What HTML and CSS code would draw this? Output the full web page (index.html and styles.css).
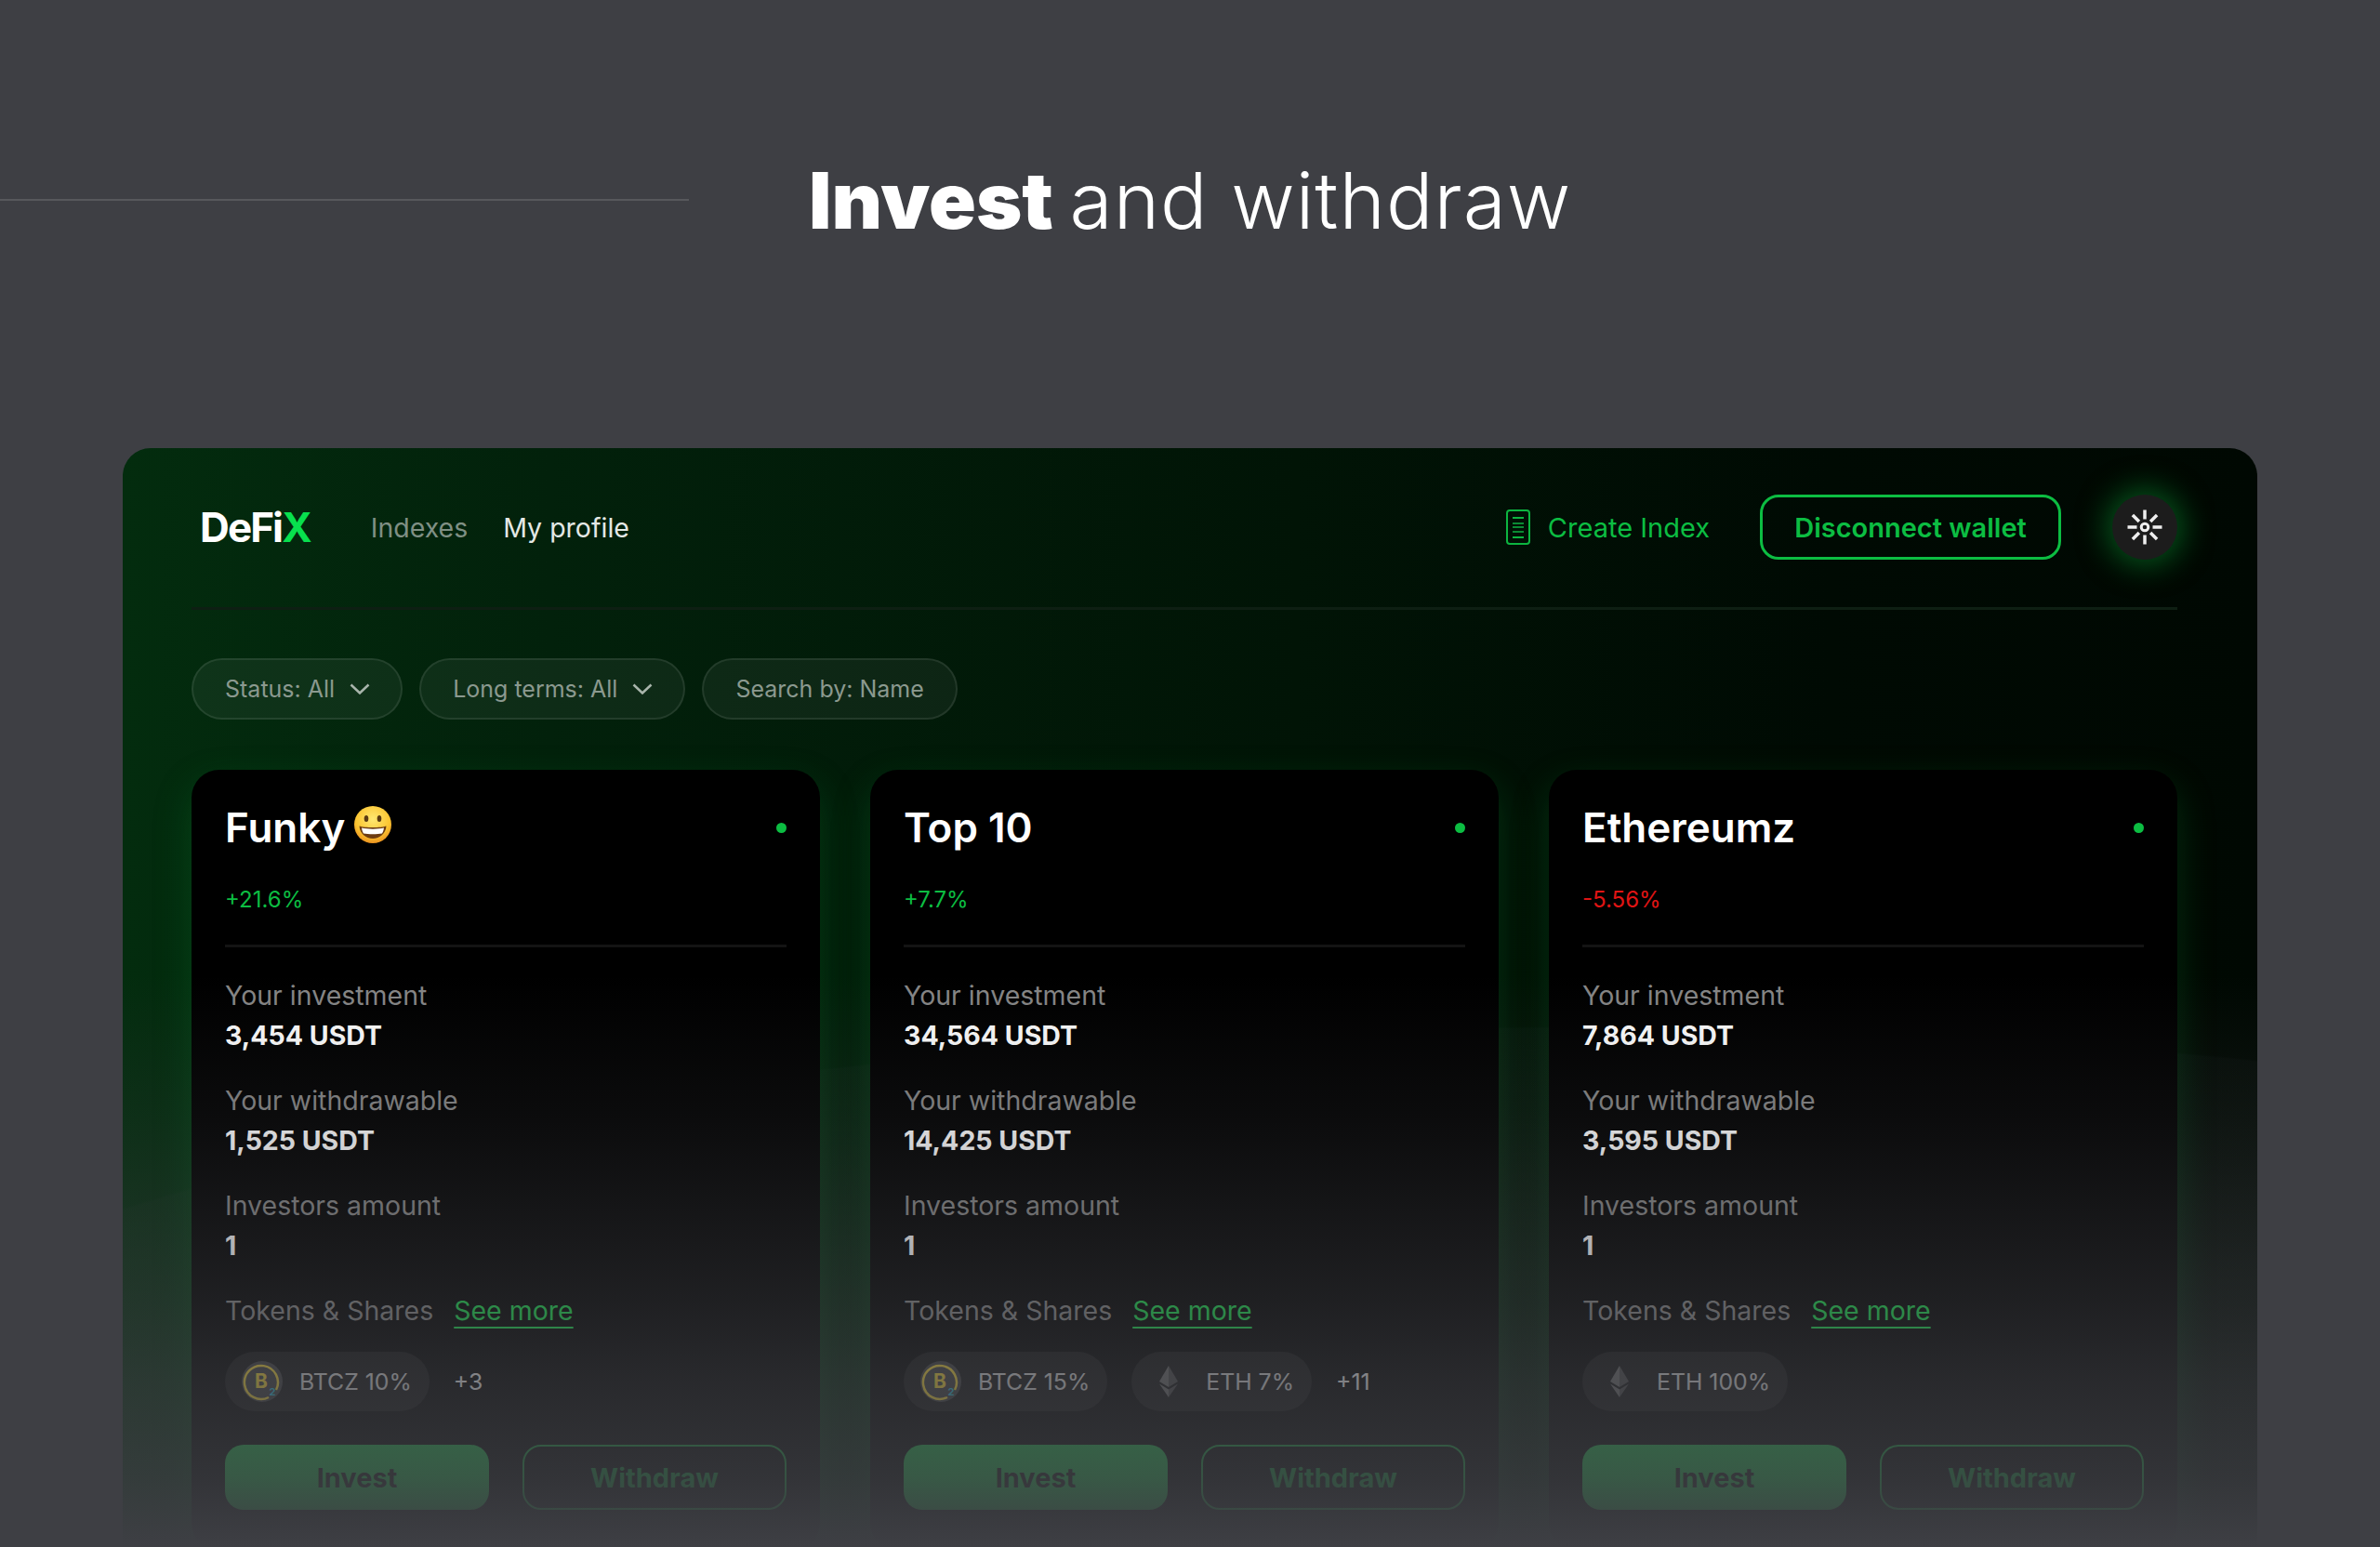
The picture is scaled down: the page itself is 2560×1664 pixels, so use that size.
FILE: index.html
```html
<!DOCTYPE html>
<html lang="en">
<head>
  <meta charset="UTF-8" />
  <title>DeFiX - Invest and withdraw</title>
  <link rel="stylesheet" href="styles.css">
</head>
<body>
  <section class="hero">
    <div class="hero-line"></div>
    <h1 class="hero-title"><b>Invest</b> <span>and withdraw</span></h1>
  </section>

  <main class="panel">
    <header class="topbar">
      <div class="logo">DeFi<span>X</span></div>
      <nav class="nav">
        <a class="nav-link">Indexes</a>
        <a class="nav-link active">My profile</a>
      </nav>
      <a class="create-link">
        <svg class="doc-icon" width="26" height="38" viewBox="0 0 26 38" fill="none">
          <rect x="1" y="1" width="24" height="36" rx="3" stroke="#0cb540" stroke-width="2"/>
          <path d="M7 9h12M7 30h12" stroke="#0cb540" stroke-width="2"/>
          <path d="M7 15h12M7 19h12M7 24h12" stroke="#0a8a33" stroke-width="2"/>
        </svg>
        Create Index
      </a>
      <button class="wallet-btn">Disconnect wallet</button>
      <button class="theme-btn">
        <svg width="40" height="40" viewBox="0 0 40 40" fill="none" stroke="#eee" stroke-width="3.500">
          <circle cx="20" cy="20" r="3.800" stroke-width="3"/>
          <path d="M20 1.500v10M20 28.500v10M1.500 20h10M28.500 20h10M6.900 6.900l7 7M26.100 26.100l7 7M33.100 6.900l-7 7M13.900 26.100l-7 7"/>
        </svg>
      </button>
    </header>

    <div class="filters">
      <div class="filter has-menu">Status: All
        <svg class="chevron" width="22" height="12" viewBox="0 0 22 12" fill="none"><path d="M1.500 1.500L11 10.500l9.500-9"/></svg>
      </div>
      <div class="filter has-menu">Long terms: All
        <svg class="chevron" width="22" height="12" viewBox="0 0 22 12" fill="none"><path d="M1.500 1.500L11 10.500l9.500-9"/></svg>
      </div>
      <div class="filter">Search by: Name</div>
    </div>

    <div class="cards">
      <article class="card">
        <div class="card-head">
          <h2 class="card-title">Funky</h2>
          <svg class="emoji" width="40" height="40" viewBox="0 0 40 40">
            <defs>
              <radialGradient id="face" cx="50%" cy="35%" r="70%">
                <stop offset="0%" stop-color="#ffe872"/>
                <stop offset="65%" stop-color="#fbc531"/>
                <stop offset="100%" stop-color="#e8861c"/>
              </radialGradient>
            </defs>
            <circle cx="20" cy="20" r="20" fill="url(#face)"/>
            <ellipse cx="13" cy="13.500" rx="2.300" ry="3.600" fill="#5a3a12"/>
            <ellipse cx="27" cy="13.500" rx="2.300" ry="3.600" fill="#5a3a12"/>
            <path d="M5.500 21.500c5 2 24 2 29 0-.5 8-7 13.500-14.500 13.500S6 29.500 5.500 21.500z" fill="#6d3c12"/>
            <path d="M8 23.500c6 1.500 18 1.500 24 0-.5 3-1 4.500-2 6-5 1-15 1-20 0-1-1.500-1.500-3-2-6z" fill="#fff"/>
          </svg>
          <span class="status-dot"></span>
        </div>
        <div class="change up">+21.6%</div>
        <hr class="card-rule">
        <div class="stat"><div class="stat-label">Your investment</div><div class="stat-value">3,454 USDT</div></div>
        <div class="stat"><div class="stat-label">Your withdrawable</div><div class="stat-value">1,525 USDT</div></div>
        <div class="stat"><div class="stat-label">Investors amount</div><div class="stat-value">1</div></div>
        <div class="tokens-head"><span class="stat-label">Tokens &amp; Shares</span><a class="see-more">See more</a></div>
        <div class="tokens">
          <div class="chip">
            <svg class="token-icon" width="44" height="44" viewBox="0 0 44 44">
              <circle cx="22" cy="22" r="22" fill="#434345"/>
              <path d="M37 31a18 18 0 1 0-8 8" fill="none" stroke="#ffdf3a" stroke-width="2.500"/>
              <text x="21" y="29" class="btc-b">B</text>
              <text x="33" y="37" class="btc-two">2</text>
            </svg>
            BTCZ 10%
          </div>
          <span class="more-count">+3</span>
        </div>
        <div class="card-actions"><button class="invest-btn">Invest</button><button class="withdraw-btn">Withdraw</button></div>
      </article>

      <article class="card">
        <div class="card-head">
          <h2 class="card-title">Top 10</h2>
          <span class="status-dot"></span>
        </div>
        <div class="change up">+7.7%</div>
        <hr class="card-rule">
        <div class="stat"><div class="stat-label">Your investment</div><div class="stat-value">34,564 USDT</div></div>
        <div class="stat"><div class="stat-label">Your withdrawable</div><div class="stat-value">14,425 USDT</div></div>
        <div class="stat"><div class="stat-label">Investors amount</div><div class="stat-value">1</div></div>
        <div class="tokens-head"><span class="stat-label">Tokens &amp; Shares</span><a class="see-more">See more</a></div>
        <div class="tokens">
          <div class="chip">
            <svg class="token-icon" width="44" height="44" viewBox="0 0 44 44">
              <circle cx="22" cy="22" r="22" fill="#434345"/>
              <path d="M37 31a18 18 0 1 0-8 8" fill="none" stroke="#ffdf3a" stroke-width="2.500"/>
              <text x="21" y="29" class="btc-b">B</text>
              <text x="33" y="37" class="btc-two">2</text>
            </svg>
            BTCZ 15%
          </div>
          <div class="chip">
            <svg class="token-icon" width="44" height="44" viewBox="0 0 44 44">
              <path d="M22 5L12 22l10 6z" fill="#707070"/>
              <path d="M22 5l10 17-10 6z" fill="#4c4c4c"/>
              <path d="M12 24.500L22 39V30.500z" fill="#707070"/>
              <path d="M32 24.500L22 39V30.500z" fill="#4c4c4c"/>
            </svg>
            ETH 7%
          </div>
          <span class="more-count">+11</span>
        </div>
        <div class="card-actions"><button class="invest-btn">Invest</button><button class="withdraw-btn">Withdraw</button></div>
      </article>

      <article class="card">
        <div class="card-head">
          <h2 class="card-title">Ethereumz</h2>
          <span class="status-dot"></span>
        </div>
        <div class="change down">-5.56%</div>
        <hr class="card-rule">
        <div class="stat"><div class="stat-label">Your investment</div><div class="stat-value">7,864 USDT</div></div>
        <div class="stat"><div class="stat-label">Your withdrawable</div><div class="stat-value">3,595 USDT</div></div>
        <div class="stat"><div class="stat-label">Investors amount</div><div class="stat-value">1</div></div>
        <div class="tokens-head"><span class="stat-label">Tokens &amp; Shares</span><a class="see-more">See more</a></div>
        <div class="tokens">
          <div class="chip">
            <svg class="token-icon" width="44" height="44" viewBox="0 0 44 44">
              <path d="M22 5L12 22l10 6z" fill="#707070"/>
              <path d="M22 5l10 17-10 6z" fill="#4c4c4c"/>
              <path d="M12 24.500L22 39V30.500z" fill="#707070"/>
              <path d="M32 24.500L22 39V30.500z" fill="#4c4c4c"/>
            </svg>
            ETH 100%
          </div>
        </div>
        <div class="card-actions"><button class="invest-btn">Invest</button><button class="withdraw-btn">Withdraw</button></div>
      </article>
    </div>
  </main>
</body>
</html>
```

FILE: styles.css
```css
:root {
  --bg: #3e3f44;
  --green: #0cbd42;
}

* {
  box-sizing: border-box;
}

html, body {
  height: 1664px;
}

body {
  margin: 0;
  background: var(--bg);
  color: #fff;
  font-family: Inter, 'Noto Sans', sans-serif;
  overflow: hidden;
}

button {
  font-family: inherit;
  cursor: pointer;
}

/* hero */
.hero {
  display: flex;
  align-items: center;
  height: 482px;
  padding-bottom: 50px;
}

.hero-line {
  width: 741px;
  height: 2px;
  margin: 0 129px 2px 0;
  background: #57585c;
}

.hero-title {
  margin: 0;
  font-size: 84px;
  line-height: 96px;
  font-weight: 300;
  white-space: nowrap;
}

.hero-title b {
  font-weight: 900;
  margin-right: -6px;
}

.hero-title span {
  letter-spacing: 1px;
}

/* panel */
.panel {
  position: relative;
  height: 1182px;
  margin: 0 132px;
  padding: 50px 86px 0 74px;
  border-radius: 30px 30px 0 0;
  overflow: hidden;
  background:
    radial-gradient(ellipse 2067px 560px at 1568px 1182px, rgba(62,63,68,0.07) 99.6%, transparent 100%),
    linear-gradient(90deg, #032c0e 0%, #02210b 20%, #011406 55%, #000a03 80%, #000802 100%);
}

.panel::after {
  content: "";
  position: absolute;
  inset: 0;
  pointer-events: none;
  background: linear-gradient(180deg,
    rgba(62,63,68,0) 48%,
    rgba(62,63,68,0.18) 60.7%,
    rgba(62,63,68,0.5) 77.7%,
    rgba(62,63,68,0.66) 84.9%,
    rgba(62,63,68,0.82) 93.7%,
    rgba(62,63,68,1) 100%);
}

.topbar {
  display: flex;
  align-items: center;
  height: 70px;
  padding-left: 9px;
}

.logo {
  font-size: 44px;
  font-weight: 700;
  letter-spacing: -1.9px;
  margin-right: 65px;
}

.logo span {
  color: #08e04e;
}

.nav {
  display: flex;
  gap: 38px;
  font-size: 28.5px;
  margin-right: auto;
}

.nav-link {
  color: #7f8f84;
}

.nav-link.active {
  color: #e4e8e5;
}

.create-link {
  display: flex;
  align-items: center;
  gap: 19px;
  color: var(--green);
  font-size: 29px;
  margin-right: 54px;
}

.wallet-btn {
  height: 70px;
  width: 324px;
  border: 3px solid var(--green);
  border-radius: 20px;
  background: none;
  color: var(--green);
  font-size: 29px;
  font-weight: 600;
  margin-right: 55px;
}

.theme-btn {
  display: flex;
  align-items: center;
  justify-content: center;
  width: 70px;
  height: 70px;
  padding: 0;
  border: none;
  border-radius: 50%;
  background: #1c1c1c;
  box-shadow: 0 0 32px 6px rgba(10, 150, 50, 0.55);
}

.filters {
  display: flex;
  gap: 18px;
  margin-top: 51px;
  padding-top: 52px;
  border-top: 3px solid #0e1f13;
}

.filter {
  display: flex;
  align-items: center;
  gap: 16px;
  height: 66px;
  padding: 0 34px;
  border: 2px solid rgba(255, 255, 255, 0.09);
  border-radius: 33px;
  background: rgba(255, 255, 255, 0.05);
  color: #8b998f;
  font-size: 25px;
}

.filter.has-menu {
  padding-right: 33px;
}

.chevron path {
  stroke: #a9b5ac;
  stroke-width: 2.5;
}

/* cards */
.cards {
  display: grid;
  grid-template-columns: repeat(3, 676px);
  gap: 54px;
  margin-top: 54px;
}

.card {
  height: 840px;
  padding: 36px;
  border-radius: 30px;
  background: #000;
  box-shadow: 0 16px 40px rgba(10, 130, 45, 0.3);
}

.card-head {
  display: flex;
  align-items: center;
  gap: 10px;
  height: 52px;
}

.card-title {
  margin: 0;
  font-size: 44px;
  line-height: 52px;
  font-weight: 600;
}

.emoji {
  margin-bottom: 6px;
}

.status-dot {
  width: 11px;
  height: 11px;
  margin-left: auto;
  border-radius: 50%;
  background: var(--green);
}

.change {
  margin-top: 37px;
  font-size: 24px;
  line-height: 30px;
}

.change.up {
  color: var(--green);
}

.change.down {
  color: #e01414;
}

.card-rule {
  height: 3px;
  margin: 33px 0 30px;
  border: none;
  background: #141414;
}

.stat {
  margin-bottom: 27px;
}

.stat-label {
  color: #868686;
  font-size: 28.5px;
  line-height: 43px;
}

.stat-value {
  color: #fff;
  font-size: 28.5px;
  line-height: 43px;
  font-weight: 700;
}

.tokens-head {
  display: flex;
  align-items: center;
  gap: 22px;
  line-height: 43px;
}

.see-more {
  color: #1bd84e;
  font-size: 28.5px;
  text-decoration: underline;
  text-decoration-thickness: 2px;
  text-underline-offset: 7px;
}

.tokens {
  display: flex;
  align-items: center;
  gap: 26px;
  margin-top: 23px;
}

.chip {
  display: flex;
  align-items: center;
  gap: 18px;
  height: 64px;
  padding: 0 19px 0 18px;
  border-radius: 32px;
  background: rgba(255, 255, 255, 0.08);
  color: #e4e4e4;
  font-size: 24.8px;
}

.btc-b {
  fill: #ffdf3a;
  font-size: 21px;
  font-weight: 700;
  text-anchor: middle;
}

.btc-two {
  fill: #2cc4e4;
  font-size: 11px;
  font-weight: 700;
  text-anchor: middle;
}

.more-count {
  color: #fff;
  font-size: 24.8px;
}

.card-actions {
  display: grid;
  grid-template-columns: 1fr 1fr;
  gap: 36px;
  margin-top: 36px;
}

.invest-btn,
.withdraw-btn {
  height: 70px;
  border-radius: 20px;
  font-size: 29px;
  font-weight: 700;
}

.invest-btn {
  border: none;
  background: #1dcb4d;
  color: #161616;
}

.withdraw-btn {
  border: 2px solid #14a83e;
  background: none;
  color: #0e9a3a;
}
```
